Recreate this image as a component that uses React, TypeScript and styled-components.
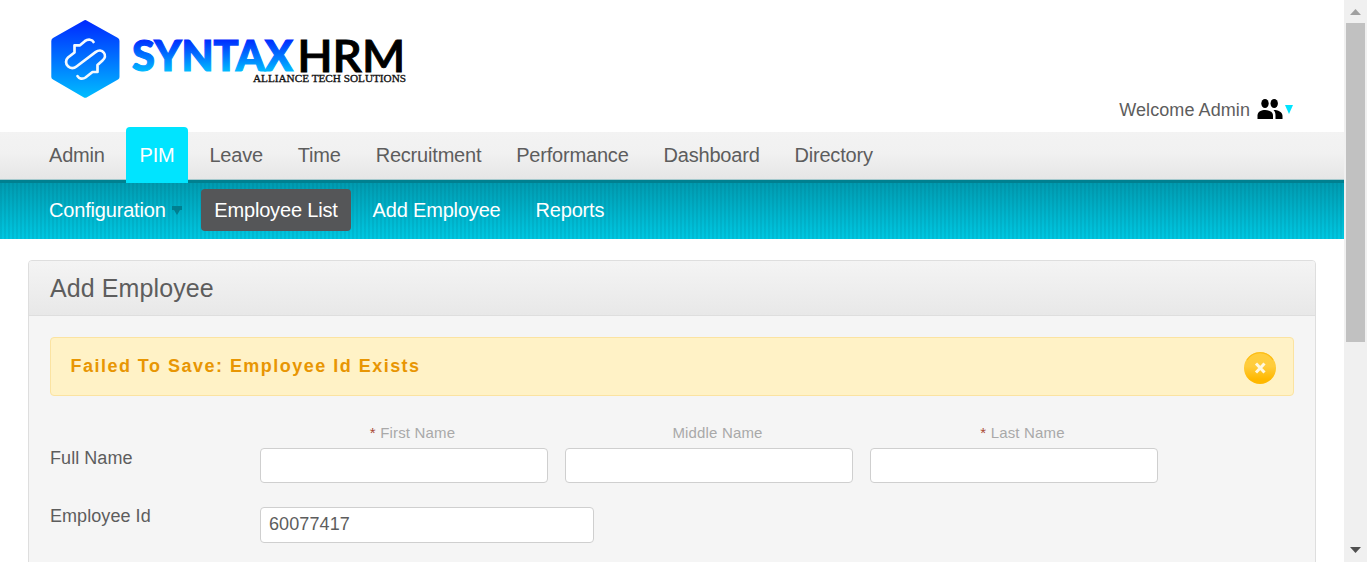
import React from 'react';
import styled, { createGlobalStyle, css } from 'styled-components';

const GlobalStyle = createGlobalStyle`
  * { box-sizing: border-box; }
  body {
    margin: 0;
    background: #fff;
    color: #5d5d5d;
    font: 18px/21px "Liberation Sans", Arial, sans-serif;
    overflow: hidden;
  }
`;

const Window = styled.div`
  display: flex;
  height: 562px;
`;

const Page = styled.div`
  flex: 1;
  min-width: 0;
  overflow: hidden;
`;

const Header = styled.header`
  display: flex;
  justify-content: space-between;
  height: 131px;
  padding: 15px 51px 0 46px;
`;

const Logo = styled.svg`
  width: 364px;
  height: 88px;
`;

const Welcome = styled.div`
  display: flex;
  align-self: flex-end;
  align-items: center;
  height: 24px;
  margin-bottom: 10px;
`;

const WelcomeText = styled.span`
  padding-top: 2px;
  letter-spacing: 0.08px;
`;

const PeopleIcon = styled.svg`
  width: 26px;
  height: 22px;
  margin: 0 2px 1px 7px;
`;

const WelcomeArrow = styled.svg`
  width: 8px;
  height: 9px;
`;

const MainMenu = styled.nav`
  display: flex;
  align-items: flex-end;
  gap: 7.85px;
  height: 52px;
  padding-left: 35.5px;
  background: linear-gradient(#fff 0, #fff 1px, #f3f3f3 1px, #f1f1f1 22px, #e6e6e6 48px, #a5c9cd 48px, #a5c9cd 49px, #008090 49px, #008090 52px);
`;

const MainItem = styled.a<{ $active?: boolean }>`
  height: 56px;
  flex: none;
  padding: 0 13.5px;
  border-radius: 4px 4px 0 0;
  font-size: 20px;
  letter-spacing: -0.19px;
  line-height: 56px;
  color: ${p => (p.$active ? '#fff' : '#5d5d5d')};
  background: ${p => (p.$active ? '#00e4ff' : 'transparent')};
`;

const SubMenu = styled.nav`
  display: flex;
  align-items: flex-start;
  gap: 8px;
  height: 56px;
  padding: 6px 0 0 35.5px;
  background:
    repeating-linear-gradient(90deg, rgba(0, 80, 100, 0.1) 0, rgba(0, 80, 100, 0.1) 2px, transparent 2px, transparent 4px),
    linear-gradient(#009bb0, #00c8e2);
`;

const SubItem = styled.a<{ $active?: boolean }>`
  display: flex;
  align-items: center;
  height: 42px;
  padding: 0 13.5px;
  border-radius: 4px;
  font-size: 20px;
  letter-spacing: -0.18px;
  color: #fff;
  ${p => p.$active && css`background: #555658;`}
`;

const SubArrow = styled.svg`
  width: 10px;
  height: 9px;
  margin: 0 -2.3px 0 6px;
`;

const Box = styled.main`
  height: 400px;
  margin: 21px 28px 0;
  border: 1px solid #dedede;
  border-radius: 4px 4px 0 0;
  background: #f5f5f5;
`;

const Heading = styled.h1`
  height: 55px;
  margin: 0;
  padding-left: 21px;
  border-bottom: 1px solid #dedede;
  border-radius: 3px 3px 0 0;
  background: linear-gradient(#f4f4f4, #e8e8e8);
  font-size: 25px;
  font-weight: normal;
  letter-spacing: 0.1px;
  line-height: 55px;
`;

const Body = styled.div`
  padding: 21px;
`;

const Message = styled.div`
  display: flex;
  align-items: center;
  justify-content: space-between;
  height: 59px;
  padding: 0 17px 0 19.5px;
  border: 1px solid #fbe3a1;
  border-radius: 4px;
  background: #fff2c6;
  color: #e89603;
  font-weight: bold;
  letter-spacing: 1.48px;
`;

const CloseIcon = styled.svg`
  width: 32px;
  height: 32px;
  margin-top: 3px;
`;

const NameRow = styled.div`
  display: flex;
  margin-top: 26px;
`;

const Label = styled.label<{ $top: number }>`
  width: 210px;
  padding-top: ${p => p.$top}px;
  letter-spacing: 0.06px;
`;

const Names = styled.div`
  display: flex;
  gap: 17px;
`;

const NameField = styled.div`
  display: flex;
  flex-direction: column;
  align-items: center;
  width: 288px;
`;

const Caption = styled.span`
  height: 26px;
  padding-left: 17px;
  font-size: 15px;
  letter-spacing: 0.17px;
  line-height: 21px;
  color: #a9a9a9;
`;

const Required = styled.em`
  color: #aa4935;
  font-style: normal;
`;

const Input = styled.input`
  width: 100%;
  height: 35px;
  padding: 0 8px;
  border: 1px solid #cfcfcf;
  border-radius: 4px;
  background: #fff;
  color: #5d5d5d;
  font: inherit;
  letter-spacing: 0.1px;
  outline: none;
`;

const IdRow = styled.div`
  display: flex;
  margin-top: 22px;
`;

const IdInput = styled(Input)`
  width: 334px;
  height: 36px;
  margin-top: 2px;
  padding-bottom: 2px;
`;

const Scrollbar = styled.div`
  display: flex;
  flex-direction: column;
  align-items: center;
  width: 23px;
  padding: 9px 0 9px;
  background: #f0f0f0;
`;

const ScrollArrow = styled.svg`
  width: 11px;
  height: 6px;
`;

const Thumb = styled.div`
  width: 19px;
  height: 319px;
  margin: 8px 0 auto;
  background: #c1c1c1;
`;

const mainItems = ['Admin', 'PIM', 'Leave', 'Time', 'Recruitment', 'Performance', 'Dashboard', 'Directory'];
const subItems = ['Configuration', 'Employee List', 'Add Employee', 'Reports'];
const nameFields = [
  { name: 'First Name', required: true },
  { name: 'Middle Name', required: false },
  { name: 'Last Name', required: true },
];

export default function App() {
  return (
    <Window>
      <GlobalStyle />
      <Page>
        <Header>
          <Logo viewBox="46 15 364 88">
            <defs>
              <linearGradient id="hex" x1="0" y1="0" x2="0" y2="1">
                <stop offset="0" stopColor="#0028ff" />
                <stop offset="1" stopColor="#00bdff" />
              </linearGradient>
              <linearGradient id="word" gradientUnits="userSpaceOnUse" x1="0" y1="39" x2="0" y2="72">
                <stop offset="0" stopColor="#0028ff" />
                <stop offset="1" stopColor="#00bdff" />
              </linearGradient>
            </defs>
            <path d="M83.5 20.7Q85.3 19.5 87 20.7L118 38Q119.5 39 119.5 41V77Q119.5 78.6 118 79.5L87 97.2Q85.3 98.5 83.5 97.2L53 79.5Q51.3 78.5 51.3 77V41Q51.3 39 53 38Z" fill="url(#hex)" />
            <path d="M93.5 42C92.5 39.5 88 38.8 84.8 41.2L81.5 44L80 45.3H74.5V52.5L68 57.5C65.3 60 65.5 64.2 68 66.3C70.5 68.7 74 68.5 76.5 66.5L95.5 52.2C98.5 50 102 50.2 103.700 52.500C106 55.400 105 58.500 102.500 60.500L97.500 65V72H92.500L85.500 77.500C82.500 79.500 79 78.800 77.500 76.200" fill="none" stroke="#f3faff" strokeWidth="2.700" strokeLinecap="round" strokeLinejoin="round" />
            <text x="132" y="70.800" fontFamily="Lato" fontWeight="900" fontSize="42" textLength="161" lengthAdjust="spacingAndGlyphs" fill="url(#word)" stroke="url(#word)" strokeWidth="1.200">SYNTAX</text>
            <text x="297.200" y="71.500" fontFamily="Lato" fontWeight="600" fontSize="44" textLength="108" lengthAdjust="spacingAndGlyphs" fill="#000" stroke="#000" strokeWidth="0.900">HRM</text>
            <text x="253" y="81.700" fontFamily="Liberation Serif" fontSize="9.500" textLength="153" lengthAdjust="spacingAndGlyphs" fill="#111" stroke="#111" strokeWidth="0.300">ALLIANCE TECH SOLUTIONS</text>
          </Logo>
          <Welcome>
            <WelcomeText>Welcome Admin</WelcomeText>
            <PeopleIcon viewBox="0 0 26 22">
              <ellipse cx="8" cy="5.500" rx="3.700" ry="4.600" />
              <ellipse cx="17.200" cy="5.500" rx="3.700" ry="4.600" />
              <path d="M0.500 21V17.500C0.500 13.700 4.500 12 8.200 12S16 13.700 16 17.500V21Z" />
              <path d="M16.500 12C21 12 25.500 14 25.500 17.800V21H18.500V17.500C18.500 15 17.800 13.400 16.500 12Z" />
            </PeopleIcon>
            <WelcomeArrow viewBox="0 0 8 9"><path d="M0 0H8L4 9Z" fill="#00e4ff" /></WelcomeArrow>
          </Welcome>
        </Header>
        <MainMenu>
          {mainItems.map(item => <MainItem key={item} $active={item === 'PIM'}>{item}</MainItem>)}
        </MainMenu>
        <SubMenu>
          {subItems.map(item => (
            <SubItem key={item} $active={item === 'Employee List'}>
              {item}
              {item === 'Configuration' && (
                <SubArrow viewBox="0 0 10 9"><path d="M0 0H10V4H8L5 9L2 4H0Z" fill="#007f90" /></SubArrow>
              )}
            </SubItem>
          ))}
        </SubMenu>
        <Box>
          <Heading>Add Employee</Heading>
          <Body>
            <Message>
              Failed To Save: Employee Id Exists
              <CloseIcon viewBox="0 0 32 32">
                <defs>
                  <linearGradient id="close" x1="0" y1="0" x2="0" y2="1">
                    <stop offset="0" stopColor="#ffcf3e" />
                    <stop offset="0.450" stopColor="#ffcc3c" />
                    <stop offset="0.850" stopColor="#ffb800" />
                  </linearGradient>
                </defs>
                <circle cx="16" cy="16" r="16" fill="url(#close)" />
                <path d="M3 8A15.300 15.300 0 0 1 29 8" fill="none" stroke="#fdbc14" strokeWidth="1.200" />
                <path d="M12 11.500L20.500 20.500M20.500 11.500L12 20.500" stroke="#fff8df" strokeWidth="3" />
              </CloseIcon>
            </Message>
            <NameRow>
              <Label $top={26}>Full Name</Label>
              <Names>
                {nameFields.map(field => (
                  <NameField key={field.name}>
                    <Caption>
                      {field.required && <Required>* </Required>}
                      {field.name}
                    </Caption>
                    <Input aria-label={field.name} />
                  </NameField>
                ))}
              </Names>
            </NameRow>
            <IdRow>
              <Label $top={1}>Employee Id</Label>
              <IdInput defaultValue="60077417" />
            </IdRow>
          </Body>
        </Box>
      </Page>
      <Scrollbar>
        <ScrollArrow viewBox="0 0 11 6"><path d="M0 6L5.500 0L11 6Z" fill="#a0a0a0" /></ScrollArrow>
        <Thumb />
        <ScrollArrow viewBox="0 0 11 6"><path d="M0 0H11L5.500 6Z" fill="#505050" /></ScrollArrow>
      </Scrollbar>
    </Window>
  );
}
